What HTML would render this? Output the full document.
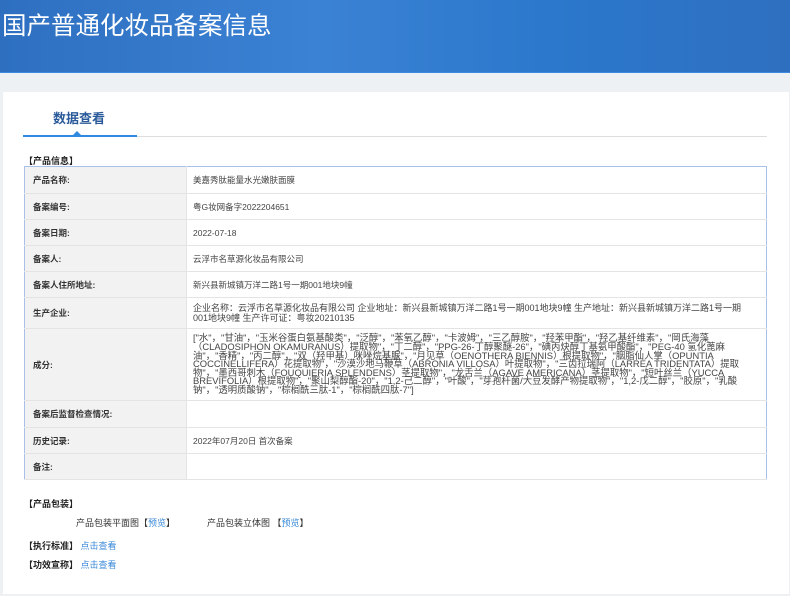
<!DOCTYPE html><html><head><meta charset="utf-8"><style>
*{margin:0;padding:0;box-sizing:border-box}
body{width:790px;height:596px;background:#eef1f4;font-family:"Liberation Sans","Noto Sans CJK SC",sans-serif;position:relative;overflow:hidden;color:#333}
.hd{position:absolute;left:0;top:0;width:790px;height:73px;background:linear-gradient(90deg,#2e6fc0,#3b82d4 40%,#2b78cc 70%,#2f6fc0);border-bottom:1px solid #3c8ae0}
.hd h1{position:absolute;left:2px;top:7px;font-size:24.5px;font-weight:normal;color:#fff;letter-spacing:0}
.pn{position:absolute;left:3px;top:92px;width:786px;height:502px;background:#fff}
.tab{position:absolute;left:53px;top:108px;font-size:13px;color:#2a5a9a;font-weight:bold}
.ul{position:absolute;left:23px;top:136px;width:744px;height:1px;background:#ddd}
.ub{position:absolute;left:23px;top:135px;width:114px;height:2px;background:#2f8ae0}
.tri{position:absolute;left:73px;top:131px;width:0;height:0;border-left:4px solid transparent;border-right:4px solid transparent;border-bottom:4px solid #2f8ae0}
.sec{position:absolute;font-size:9px;font-weight:bold;color:#222}
table{position:absolute;left:24px;top:166px;width:743px;border-collapse:collapse;border:1px solid #a9c1e8;font-size:8.5px}
td{border-bottom:1px solid #e4e4e4;vertical-align:middle;line-height:10px}
td.l{width:162px;background:#f2f2f2;font-weight:bold;padding-left:8px;color:#333;border-right:1px solid #e4e4e4}
td.v{padding:0 6px;color:#444}
td.ing{font-size:9.4px;line-height:8.6px;padding-right:20px}
td.pe{font-size:9px;padding-right:14px}
a{color:#3a8ad8;text-decoration:none}
.t{position:absolute;font-size:9px;color:#333}
</style></head><body>
<div class="hd"><h1>国产普通化妆品备案信息</h1></div>
<div class="pn"></div>
<div class="tab">数据查看</div>
<div class="ul"></div><div class="ub"></div><div class="tri"></div>
<div class="sec" style="left:24px;top:154px">【产品信息】</div>
<table>
<tr style="height:27px"><td class="l">产品名称:</td><td class="v">美嘉秀肽能量水光嫩肤面膜</td></tr>
<tr style="height:26px"><td class="l">备案编号:</td><td class="v">粤G妆网备字2022204651</td></tr>
<tr style="height:26px"><td class="l">备案日期:</td><td class="v">2022-07-18</td></tr>
<tr style="height:26px"><td class="l">备案人:</td><td class="v">云浮市名草源化妆品有限公司</td></tr>
<tr style="height:26px"><td class="l">备案人住所地址:</td><td class="v">新兴县新城镇万洋二路1号一期001地块9幢</td></tr>
<tr style="height:31px"><td class="l">生产企业:</td><td class="v pe">企业名称：云浮市名草源化妆品有限公司 企业地址：新兴县新城镇万洋二路1号一期001地块9幢 生产地址：新兴县新城镇万洋二路1号一期001地块9幢 生产许可证：粤妆20210135</td></tr>
<tr style="height:72px"><td class="l">成分:</td><td class="v ing">["水"，"甘油"，"玉米谷蛋白氨基酸类"，"泛醇"，"苯氧乙醇"，"卡波姆"，"三乙醇胺"，"羟苯甲酯"，"羟乙基纤维素"，"岡氏海藻（CLADOSIPHON OKAMURANUS）提取物"，"丁二醇"，"PPG-26-丁醇聚醚-26"，"碘丙炔醇丁基氨甲酸酯"，"PEG-40 氢化蓖麻油"，"香精"，"丙二醇"，"双（羟甲基）咪唑烷基脲"，"月见草（OENOTHERA BIENNIS）根提取物"，"胭脂仙人掌（OPUNTIA COCCINELLIFERA）花提取物"，"沙漠沙地马鞭草（ABRONIA VILLOSA）叶提取物"，"三齿拉瑞阿（LARREA TRIDENTATA）提取物"，"墨西哥刺木（FOUQUIERIA SPLENDENS）茎提取物"，"龙舌兰（AGAVE AMERICANA）茎提取物"，"短叶丝兰（YUCCA BREVIFOLIA）根提取物"，"聚山梨醇酯-20"，"1,2-己二醇"，"叶酸"，"芽孢杆菌/大豆发酵产物提取物"，"1,2-戊二醇"，"胶原"，"乳酸钠"，"透明质酸钠"，"棕榈酰三肽-1"，"棕榈酰四肽-7"]</td></tr>
<tr style="height:27px"><td class="l">备案后监督检查情况:</td><td class="v"></td></tr>
<tr style="height:26px"><td class="l">历史记录:</td><td class="v">2022年07月20日 首次备案</td></tr>
<tr style="height:26px"><td class="l">备注:</td><td class="v"></td></tr>
</table>
<div class="sec" style="left:24px;top:497px">【产品包装】</div>
<div class="t" style="left:76px;top:516px">产品包装平面图【<a>预览</a>】</div>
<div class="t" style="left:207px;top:516px">产品包装立体图 【<a>预览</a>】</div>
<div class="sec" style="left:24px;top:539px">【执行标准】 <a style="font-weight:normal">点击查看</a></div>
<div class="sec" style="left:24px;top:558px">【功效宣称】 <a style="font-weight:normal">点击查看</a></div>
</body></html>
